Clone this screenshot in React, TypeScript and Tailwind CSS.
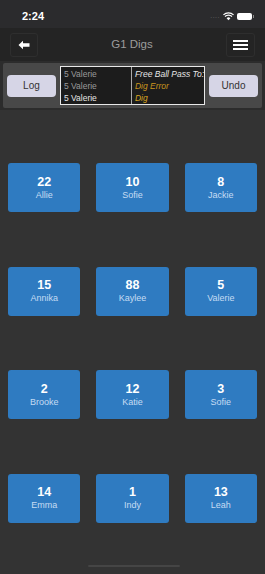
const players = [
  { num: "22", name: "Allie" },
  { num: "10", name: "Sofie" },
  { num: "8", name: "Jackie" },
  { num: "15", name: "Annika" },
  { num: "88", name: "Kaylee" },
  { num: "5", name: "Valerie" },
  { num: "2", name: "Brooke" },
  { num: "12", name: "Katie" },
  { num: "3", name: "Sofie" },
  { num: "14", name: "Emma" },
  { num: "1", name: "Indy" },
  { num: "13", name: "Leah" },
];

function StatusBar() {
  return (
    <div className="h-[28px] bg-[#2b2b2d] flex items-center justify-between pl-[22px] pr-[11px] pt-[4px]">
      <span className="text-white text-[11px] font-semibold">2:24</span>
      <div className="flex items-center gap-[3px]">
        <span className="text-[#666] text-[7px] tracking-[0.5px]">....</span>
        <svg width="11" height="9" viewBox="0 0 10 8">
          <path d="M5 7.5 L3.3 5.6 A2.4 2.4 0 0 1 6.7 5.6 Z" fill="#fff" />
          <path d="M1.8 4 A4.5 4.5 0 0 1 8.2 4" stroke="#fff" strokeWidth="1.1" fill="none" />
          <path d="M0.4 2.5 A6.6 6.6 0 0 1 9.6 2.5" stroke="#fff" strokeWidth="1.1" fill="none" />
        </svg>
        <div className="flex items-center">
          <div className="w-[15px] h-[7px] rounded-[2px] bg-white" />
          <div className="w-[1px] h-[3px] bg-[#888] ml-[1px]" />
        </div>
      </div>
    </div>
  );
}

function NavBar() {
  return (
    <div className="h-[33px] bg-[#242424] flex items-center justify-between px-[10px]">
      <div className="w-[28px] h-[24px] rounded-[3px] border border-[#2e2e2e] flex items-center justify-center">
        <svg width="12" height="10" viewBox="0 0 12 10">
          <path d="M0.5 5 L5 0.8 L5 3.3 L11.5 3.3 L11.5 6.7 L5 6.7 L5 9.2 Z" fill="#fff" />
        </svg>
      </div>
      <span className="text-[#9c9c9c] text-[11.5px]">G1 Digs</span>
      <div className="w-[29px] h-[24px] rounded-[3px] border border-[#2e2e2e] flex flex-col items-center justify-center gap-[2px]">
        <div className="w-[15px] h-[2px] bg-white" />
        <div className="w-[15px] h-[2px] bg-white" />
        <div className="w-[15px] h-[2px] bg-white" />
      </div>
    </div>
  );
}

function Toolbar() {
  return (
    <div className="bg-[#2c2c2c] px-[3px] pt-[2px] pb-[2px]">
      <div className="h-[45px] bg-[#484848] rounded-[2px] flex items-center px-[4px] gap-[4px]">
        <button className="w-[50px] h-[22px] rounded-[4px] bg-[#d6d5e6] text-[#333] text-[10px]">
          Log
        </button>
        <div className="flex-1 h-[39px] border border-[#e8e8e8] bg-[#1c1c1c] flex text-[8.5px] leading-[12px]">
          <div className="w-[71px] border-r border-[#aaa] pl-[3px] pt-[1px] flex flex-col">
            <span className="text-[#9a9a9a]">5 Valerie</span>
            <span className="text-[#9a9a9a]">5 Valerie</span>
            <span className="text-[#e6e6e6]">5 Valerie</span>
          </div>
          <div className="flex-1 pl-[3px] pt-[1px] flex flex-col italic overflow-hidden whitespace-nowrap">
            <span className="text-[#e6e6e6]">Free Ball Pass To:</span>
            <span className="text-[#c9951e]">Dig Error</span>
            <span className="text-[#d9a520]">Dig</span>
          </div>
        </div>
        <button className="w-[50px] h-[22px] rounded-[4px] bg-[#d6d5e6] text-[#333] text-[10px]">
          Undo
        </button>
      </div>
    </div>
  );
}

export default function App() {
  return (
    <div
      className="w-[265px] h-[574px] bg-[#333333] flex flex-col overflow-hidden"
      style={{ fontFamily: '"Liberation Sans", Arial, sans-serif' }}
    >
      <StatusBar />
      <NavBar />
      <Toolbar />
      <div className="flex-1 relative px-[8px] pt-[53px]">
        <div className="grid grid-cols-3 gap-x-[16px] gap-y-[54.5px]">
          {players.map((p, i) => (
            <div
              key={i}
              className="h-[49px] rounded-[3px] bg-[#2f7bc1] flex flex-col items-center justify-center"
            >
              <span className="text-white text-[12.5px] font-bold leading-[14px]">{p.num}</span>
              <span className="text-[#c6dcf3] text-[9px] leading-[12px]">{p.name}</span>
            </div>
          ))}
        </div>
        <div className="absolute bottom-[7px] left-[88px] w-[92px] h-[2px] rounded-full bg-[#454545]" />
      </div>
    </div>
  );
}
